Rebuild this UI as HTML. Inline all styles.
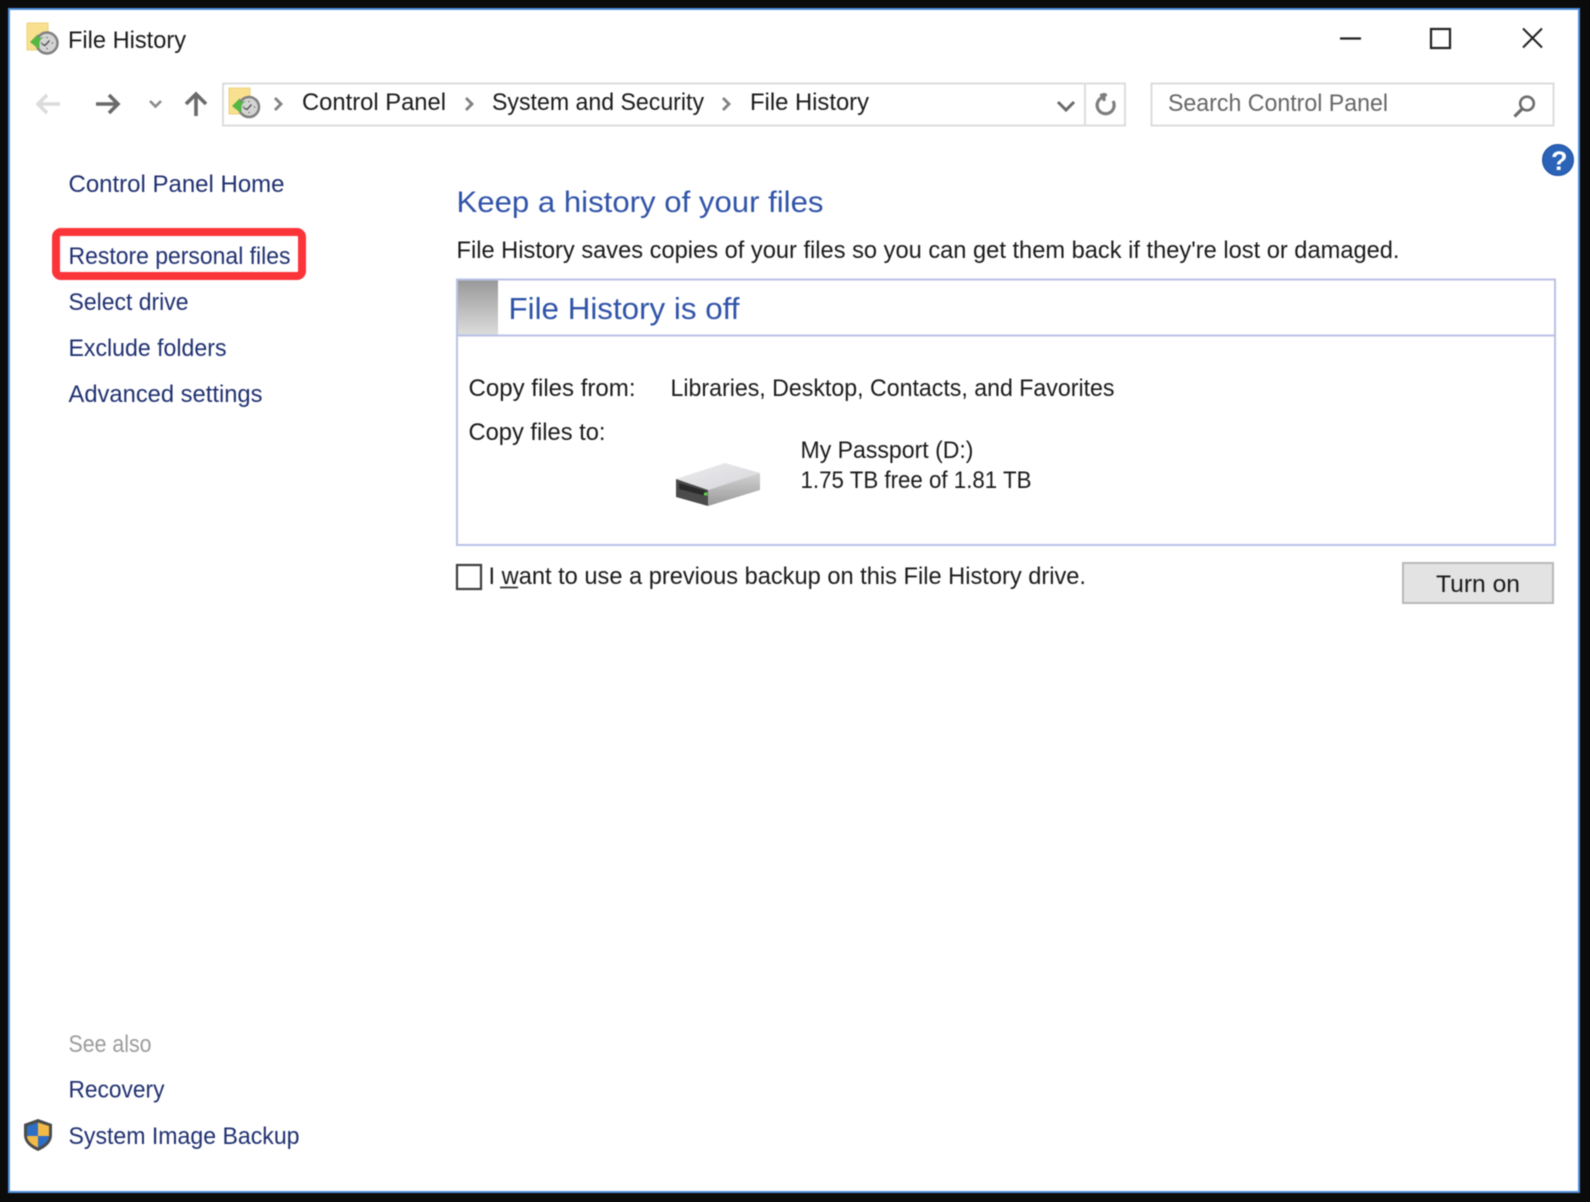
<!DOCTYPE html>
<html lang="en">
<head>
<meta charset="utf-8">
<title>File History</title>
<style>
html,body{margin:0;padding:0;background:#0b0b0b;width:1590px;height:1202px;overflow:hidden}
svg{display:block;filter:blur(.55px)}
text{font-family:"Liberation Sans",Arial,sans-serif;font-size:24px;fill:#1a1a1a}
.l{fill:#1f3070}
.h{fill:#3053a8}
.g{fill:#666}
</style>
</head>
<body>
<svg xmlns="http://www.w3.org/2000/svg" width="1590" height="1202" viewBox="0 0 1590 1202">
<defs>
<linearGradient id="sq" x1="0" y1="0" x2="0" y2="1"><stop offset="0" stop-color="#999"/><stop offset="1" stop-color="#dcdcdc"/></linearGradient>
<linearGradient id="dt" x1="0" y1="0" x2="1" y2="1"><stop offset="0" stop-color="#ececef"/><stop offset="1" stop-color="#d6d6da"/></linearGradient>
<linearGradient id="ds" x1="0" y1="0" x2="0" y2="1"><stop offset="0" stop-color="#d2d2d2"/><stop offset="1" stop-color="#9a9a9a"/></linearGradient>
</defs>
<rect width="1590" height="1202" fill="#0b0b0b"/>
<rect x="9" y="9" width="1570" height="1183" fill="#fff" stroke="#4f8fdc" stroke-width="2"/>

<!-- title icon -->
<g>
<rect x="27" y="23" width="21" height="27" fill="#f9e08f" stroke="#ecd27e"/>
<circle cx="47" cy="43" r="10.500" fill="#d4d4d4" stroke="#808080" stroke-width="2.500"/>
<path d="M42 44l3 1.500 4.500-5M47 37v1M47 48v1M41 43h1M52 43h1" fill="none" stroke="#555" stroke-width="1.400"/>
<path d="M30 42l8-8v4.500c2-1 4-1.500 6-1-3 1-4.500 3-4.500 6v4.500h-2z" fill="#55b744"/>
</g>
<text x="68" y="48" textLength="118" lengthAdjust="spacingAndGlyphs">File History</text>

<!-- window controls -->
<path d="M1340 38.500h21" stroke="#222" stroke-width="2.200"/>
<rect x="1431" y="29" width="19" height="19" fill="none" stroke="#222" stroke-width="2.200"/>
<path d="M1523 28.500l19 19M1542 28.500l-19 19" stroke="#222" stroke-width="2"/>

<!-- nav -->
<path d="M38 104h22M47 95l-9 9 9 9" fill="none" stroke="#dcdcdc" stroke-width="3.600"/>
<path d="M96 104h22M109 95l9 9-9 9" fill="none" stroke="#6a6a6a" stroke-width="3.600"/>
<path d="M150 101l5.500 5.500 5.500-5.500" fill="none" stroke="#8a8a8a" stroke-width="2.600"/>
<path d="M196 116V95M186 104l10-10 10 10" fill="none" stroke="#6a6a6a" stroke-width="3.600"/>

<!-- address bar -->
<rect x="223" y="83.500" width="902" height="42" fill="#fff" stroke="#dcdcdc" stroke-width="2"/>
<path d="M1085 83v42" stroke="#dcdcdc" stroke-width="2"/>
<g>
<rect x="229" y="88" width="21" height="26" fill="#f9e08f" stroke="#ecd27e"/>
<circle cx="249" cy="107" r="10" fill="#d4d4d4" stroke="#808080" stroke-width="2.500"/>
<path d="M244 108l3 1.500 4.500-5M249 101v1M249 112v1M243 107h1M254 107h1" fill="none" stroke="#555" stroke-width="1.400"/>
<path d="M232 106l8-8v4.500c2-1 4-1.500 6-1-3 1-4.500 3-4.500 6v4.500h-2z" fill="#55b744"/>
</g>
<path d="M275 98l6 6-6 6M466 98l6 6-6 6M723 98l6 6-6 6" fill="none" stroke="#808080" stroke-width="2.800"/>
<text x="302" y="110" textLength="144" lengthAdjust="spacingAndGlyphs">Control Panel</text>
<text x="492" y="110" textLength="212" lengthAdjust="spacingAndGlyphs">System and Security</text>
<text x="750" y="110" textLength="119" lengthAdjust="spacingAndGlyphs">File History</text>
<path d="M1058 102l8 8 8-8" fill="none" stroke="#6a6a6a" stroke-width="3"/>
<path d="M1113 101a8.500 8.500 0 1 1-9.500-4M1104 93v8" fill="none" stroke="#7e7e7e" stroke-width="3.200"/>
<path d="M1100 95h7" stroke="#7e7e7e" stroke-width="2.600"/>

<!-- search -->
<rect x="1151.500" y="83.500" width="402" height="42" fill="#fff" stroke="#dcdcdc" stroke-width="2"/>
<text class="g" x="1168" y="111" textLength="220" lengthAdjust="spacingAndGlyphs">Search Control Panel</text>
<circle cx="1527" cy="103.500" r="6.800" fill="none" stroke="#6c6c6c" stroke-width="2.600"/>
<path d="M1522 109l-7.500 7.500" stroke="#6c6c6c" stroke-width="3.200"/>

<!-- help -->
<circle cx="1558" cy="160" r="15.500" fill="#2a63b8" stroke="#1d4f9f"/>
<text x="1551" y="170" style="font-size:27px;font-weight:bold;fill:#fff">?</text>

<!-- left nav -->
<text class="l" x="68.500" y="192" textLength="216" lengthAdjust="spacingAndGlyphs">Control Panel Home</text>
<rect x="56" y="232" width="246" height="44" rx="5" fill="#fff" stroke="#fb3439" stroke-width="8"/>
<text class="l" x="68.500" y="264" textLength="222" lengthAdjust="spacingAndGlyphs">Restore personal files</text>
<text class="l" x="68.500" y="310" textLength="120" lengthAdjust="spacingAndGlyphs">Select drive</text>
<text class="l" x="68.500" y="356" textLength="158" lengthAdjust="spacingAndGlyphs">Exclude folders</text>
<text class="l" x="68.500" y="402" textLength="194" lengthAdjust="spacingAndGlyphs">Advanced settings</text>

<text x="68.500" y="1052" textLength="83" lengthAdjust="spacingAndGlyphs" style="fill:#9c9c9c">See also</text>
<text class="l" x="68.500" y="1097.500" textLength="96" lengthAdjust="spacingAndGlyphs">Recovery</text>
<text class="l" x="68.500" y="1144" textLength="231" lengthAdjust="spacingAndGlyphs">System Image Backup</text>

<!-- shield -->
<path d="M38 1119l14 5v11c0 8-7 13-14 16-7-3-14-8-14-16v-11z" fill="#4b4b4b"/>
<path d="M38 1122.500v13.500h-11v-10z" fill="#2e6ec4"/>
<path d="M38 1122.500v13.500h11v-10z" fill="#f3bb45"/>
<path d="M38 1136h-11c.5 5.500 5 9 11 11.500z" fill="#f3bb45"/>
<path d="M38 1136h11c-.5 5.500-5 9-11 11.500z" fill="#2e6ec4"/>

<!-- main heading -->
<text class="h" x="456.500" y="212" textLength="367" lengthAdjust="spacingAndGlyphs" style="font-size:30px">Keep a history of your files</text>
<text x="456.500" y="258" textLength="943" lengthAdjust="spacingAndGlyphs">File History saves copies of your files so you can get them back if they're lost or damaged.</text>

<!-- panel -->
<rect x="457" y="279.500" width="1098" height="265.500" fill="#fff" stroke="#b9c1e6" stroke-width="2"/>
<rect x="458" y="280.500" width="40" height="54" fill="url(#sq)"/>
<path d="M457 335.500h1098" stroke="#b9c1e6" stroke-width="2"/>
<text class="h" x="508.500" y="319" textLength="231" lengthAdjust="spacingAndGlyphs" style="font-size:31px">File History is off</text>
<text x="468.500" y="396" textLength="167" lengthAdjust="spacingAndGlyphs">Copy files from:</text>
<text x="670.500" y="396" textLength="444" lengthAdjust="spacingAndGlyphs">Libraries, Desktop, Contacts, and Favorites</text>
<text x="468.500" y="440" textLength="137" lengthAdjust="spacingAndGlyphs">Copy files to:</text>
<text x="800.500" y="458" textLength="173" lengthAdjust="spacingAndGlyphs">My Passport (D:)</text>
<text x="800.500" y="488" textLength="231" lengthAdjust="spacingAndGlyphs">1.75 TB free of 1.81 TB</text>

<!-- drive -->
<path d="M676 479l49-16 35 10-52 17z" fill="url(#dt)"/>
<path d="M708 490l52-17v17l-52 16z" fill="url(#ds)"/>
<path d="M676 479l32 11v16l-32-9z" fill="#4b4b4b"/>
<path d="M679 483l27 8v5l-27-7z" fill="#2a2a2a"/>
<rect x="704" y="492.500" width="3.500" height="3" fill="#5fd14a"/>

<!-- checkbox row -->
<rect x="457" y="565" width="24" height="24" fill="#fff" stroke="#3d3d3d" stroke-width="2.200"/>
<text x="488.500" y="584" textLength="597.500" lengthAdjust="spacingAndGlyphs">I want to use a previous backup on this File History drive.</text>
<path d="M500 587.500h18" stroke="#333" stroke-width="1.800"/>

<!-- button -->
<rect x="1403" y="563" width="150" height="40" fill="#e3e3e3" stroke="#b8b8b8" stroke-width="2"/>
<text x="1436" y="592" textLength="84" lengthAdjust="spacingAndGlyphs">Turn on</text>
</svg>
</body>
</html>
